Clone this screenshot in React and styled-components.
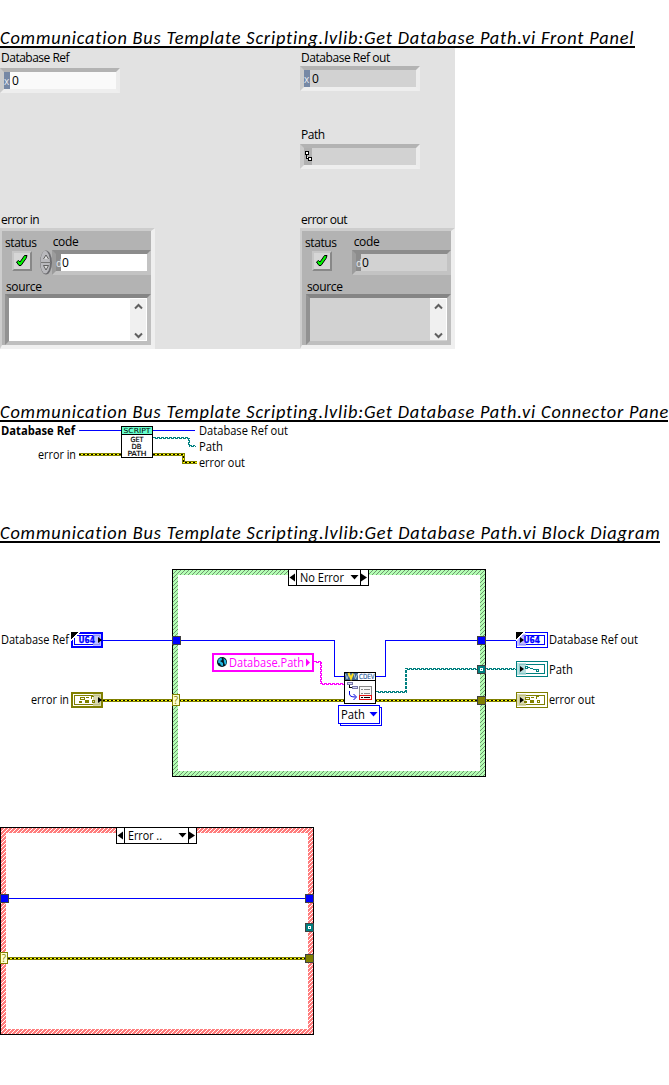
import React from 'react';
import styled, { createGlobalStyle } from 'styled-components';

const C = {
  blue: '#0000ff', teal: '#008080', olive: '#808000', pink: '#ff00ff',
};
const UI = `'Open Sans', 'Noto Sans', sans-serif`;

const Global = createGlobalStyle`
  html, body { margin: 0; padding: 0; background: #fff; }
  * { box-sizing: border-box; }
`;
const Page = styled.main`
  display: flex; flex-direction: column; align-items: flex-start;
  width: 669px; height: 1085px; padding-top: 24px; overflow: hidden;
  font-family: ${UI}; font-size: 12px; color: #000;
`;
const Heading = styled.h2`
  margin: ${p => p.$gap || 0}px 0 0; width: ${p => p.$w}px; height: 24px;
  border-bottom: 2px solid #000; white-space: nowrap;
  font: italic 400 18.3px/29px Carlito, Lato, sans-serif;
  letter-spacing: ${p => p.$ls}px;
  position: relative; clip-path: inset(0 -4px 0 0);
`;
const Panel = styled.section`
  display: grid; grid-template-columns: 300px 155px;
  width: 455px; height: 301px; background: #e2e2e2;
`;
const Column = styled.div`display: flex; flex-direction: column; align-items: flex-start;`;
const Label = styled.div`
  height: 16px; line-height: ${p => p.$lh || 17}px; white-space: nowrap;
  margin: ${p => p.$m || '0'}; letter-spacing: ${p => p.$ls ?? -0.5}px;
`;
const Field = styled.div`
  display: flex; align-items: stretch; flex: none;
  width: ${p => p.$w || 120}px; height: ${p => p.$h || 25}px; margin: ${p => p.$m || '0'};
  border-style: solid; border-width: 4px;
  border-color: ${p => p.$dark ? '#8c8c8c #c3c3c3 #c3c3c3 #9c9c9c' : '#b3b3b3 #ececec #eeeeee #cbcbcb'};
  background: ${p => p.$bg};
`;
const Radix = styled.span`
  flex: none; width: ${p => p.$w || 6}px; background: ${p => p.$bg}; color: #e8ecf2;
  font-size: 10px; line-height: 18px; overflow: visible;
`;
const Value = styled.span`padding-left: ${p => p.$pl ?? 2}px; line-height: 18px; letter-spacing: -0.5px;`;
const Cluster = styled.div`
  width: 155px; height: 121px; padding: 0 0 0 3px; background: #b3b3b3;
  border-style: solid; border-width: 3px 4px 4px 2px;
  border-color: #cdcdcd #efefef #f0f0f0 #cdcdcd;
`;
const Row = styled.div`display: flex; align-items: flex-start; height: ${p => p.$h}px; width: 146px;`;
const Check = styled.div`
  flex: none; width: 20px; height: 20px; margin: 1px ${p => p.$gap}px 0 7px; background: #d6d6d6;
  border: 2px solid; border-color: #c6c6c6 #888 #888 #c6c6c6;
`;
const Source = styled.div`
  display: flex; justify-content: flex-end; width: ${p => p.$w}px; height: 51px;
  margin-left: ${p => p.$ml}px; background: ${p => p.$bg};
  border-style: solid; border-width: 4px; border-color: #858585 #bfbfbf #bfbfbf #929292;
`;
const Scroll = styled.div`
  width: 17px; height: 42px; background: #f0f0f0; border: solid #fff; border-width: 1px 1px 0 0;
  display: flex; flex-direction: column; justify-content: space-between; align-items: center; padding: 4px 0 1px;
`;
const Figure = styled.svg`
  display: block; flex: none; overflow: visible; font-family: ${UI}; font-size: 12px;
  margin-top: ${p => p.$gap || 0}px;
`;
const Crisp = styled.g`shape-rendering: crispEdges;`;
const Wire = styled.path`fill: none; stroke: ${p => p.$c}; stroke-width: ${p => p.$w || 1};
  stroke-dasharray: ${p => p.$dash || 'none'}; stroke-dashoffset: ${p => p.$off || 0};
  shape-rendering: crispEdges;`;
const Tiny = styled.text`font: ${p => p.$fw || 700} ${p => p.$fs || 7}px 'DejaVu Sans', sans-serif; fill: ${p => p.$c || '#000'};`;

const T = ({ x, y, w, children, ...r }) => (
  <text x={x} y={y} textLength={w} lengthAdjust="spacingAndGlyphs" {...r}>{children}</text>
);
const ErrorWire = ({ d }) => (<>
  <Wire d={d} $c={C.olive} $w={3} />
  <Wire d={d} $c="#ffff00" />
  <Wire d={d} $c="#000" $dash="2 2" />
</>);
const WavyWire = ({ d, c }) => (<>
  <Wire d={d} $c={c} $dash="3 1" />
  <g transform="translate(1 1)"><Wire d={d} $c={c} $dash="3 1" $off={3} /></g>
</>);

const CheckMark = () => (
  <svg width="16" height="16" viewBox="0 0 16 16" style={{ display: 'block' }}>
    <path d="M2.500 9l2-1.500L6 9 10.500 2.500h2.500L12 5.500 7 12.500H5z" fill="#00f800" stroke="#000" strokeWidth="1" />
  </svg>
);
const Spinner = () => (
  <svg width="12" height="25" viewBox="0 0 12 25" style={{ flex: 'none' }}>
    <ellipse cx="6" cy="12.500" rx="6" ry="12" fill="#6c6c70" />
    <ellipse cx="5.200" cy="12.200" rx="4.800" ry="11.400" fill="#b9b9bd" />
    <path d="M1 12.500h10" stroke="#777" />
    <path d="M3.500 9L6 5l2.500 4M3.500 15.500h5L6 20z" fill="#ddd" stroke="#555" strokeWidth=".9" />
  </svg>
);
const Chevron = ({ down }) => (
  <svg width="9" height="7" viewBox="0 0 9 7">
    <path d={down ? 'M1 1.500l3.500 3.500L8 1.500' : 'M1 5.500L4.500 2 8 5.500'} fill="none" stroke="#606060" strokeWidth="2" />
  </svg>
);

const ErrorCluster = ({ out }) => (
  <Cluster>
    <Row $h={19}>
      <Label $m="3px 0 0" $ls={-0.4}>status</Label>
      <Label $m={out ? '2px 0 0 17px' : '2px 0 0 16px'} $ls={-0.3}>code</Label>
    </Row>
    <Row $h={26}>
      <Check $gap={out ? 20 : 8}><CheckMark /></Check>
      {!out && <Spinner />}
      <Field $dark $w={99} $bg={out ? '#d2d2d2' : '#fff'}>
        <Radix $w={5} $bg="#8c8c8c">d</Radix><Value $pl={1}>0</Value>
      </Field>
    </Row>
    <Row $h={18}><Label $m={out ? '2px 0 0 2px' : '2px 0 0 1px'} $ls={-0.35}>source</Label></Row>
    <Source $w={out ? 145 : 146} $ml={out ? 1 : 0} $bg={out ? '#d2d2d2' : '#fff'}>
      <Scroll><Chevron /><Chevron down /></Scroll>
    </Source>
  </Cluster>
);

const Tunnel = ({ x, y, c, hollow }) => (
  <Crisp>
    <rect x={x} y={y} width="9" height="9" fill="#404040" />
    <rect x={x + 1} y={y + 1} width="7" height="7" fill={c} />
    {hollow && <><rect x={x + 3} y={y + 3} width="3" height="3" fill="#fff" /><rect x={x + 4} y={y + 4} width="1" height="1" fill={c} /></>}
  </Crisp>
);

const CaseFrame = ({ id, base, line, title, tw, children }) => (
  <>
    <defs>
      <linearGradient id={id} gradientUnits="userSpaceOnUse" x1="0" y1="0" x2="2" y2="2" spreadMethod="repeat">
        <stop offset="0" stopColor={base} />
        <stop offset=".375" stopColor={base} />
        <stop offset=".375" stopColor={line} />
        <stop offset=".625" stopColor={line} />
        <stop offset=".625" stopColor={base} />
        <stop offset="1" stopColor={base} />
      </linearGradient>
    </defs>
    <Crisp>
      <path d="M0 0H314V208H0z" fill="#000" />
      <path d="M1 1H313V207H1z" fill={`url(#${id})`} />
      <path d="M6 6H308V202H6z" fill="#fff" />
      <path d="M116.500 .5H196.500V16.500H116.500zM124.500 .5V16.500M188.500 .5V16.500" fill="#fff" stroke="#000" />
    </Crisp>
    <path d="M117.500 8.500l5.500-4v8zM189 4.500v8l6-4zM178.500 6h8l-4 4.500z" />
    <T x={128} y={13} w={tw}>{title}</T>
    {children}
  </>
);
const Selector = () => (
  <>
    <Crisp><rect x=".5" y="125.500" width="7" height="11" fill="#ffffd0" stroke={C.olive} /></Crisp>
    <text x="1.800" y="135" fontSize="10" fill={C.olive}>?</text>
  </>
);

const Glyph = ({ kind }) => {
  if (kind === 'u64') return <Tiny x="7.500" y="11" $fs={8.5} $c={C.blue} textLength="16.500" lengthAdjust="spacingAndGlyphs" stroke={C.blue} strokeWidth=".3">U64</Tiny>;
  if (kind === 'path') return <Crisp><path d="M9.500 5.500h2v2h-2zM20.500 8.500h2v2h-2z" fill="none" stroke={C.teal} /><path d="M12 6.500h2M14 7.500h3M17 8.500h3" fill="none" stroke={C.teal} /></Crisp>;
  return <Crisp><path d="M9 5h5v1h-5zM9 6h1v2h-1zM13 6h1v2h-1zM9 7h5v1h-5zM15 5h3v1h-3zM20 4h3v1h-2v2h-1zM8 9h3v2h-3zM14 8h4v3h-4zM21 8h3v1h-3zM21 10h3v1h-3zM21 9h1v1h-1zM23 9h1v1h-1z" fill={C.olive} /></Crisp>;
};
const Terminal = ({ x, y, c, tint, kind, input }) => (
  <g transform={`translate(${x} ${y})`}>
    <Crisp>
      <rect width="32" height="16" fill={c} />
      <rect x={input ? 2 : 1} y={input ? 2 : 1} width={input ? 28 : 30} height={input ? 12 : 14} fill="#fff" />
      <rect x="3.500" y="3.500" width="25" height="9" fill="#fff" stroke={c} />
      <rect x={input ? 22 : 1} y="2" width={input ? 8 : 9} height="12" fill={tint} fillOpacity=".8" />
    </Crisp>
    <Glyph kind={kind} />
    {kind === 'u64' && <Crisp><path d="M0 0H9L0 9z" fill="#fff" /><path d="M0 0H7.500L0 7.500z" fill="#000" /></Crisp>}
    <path d={input ? 'M27 5v6l4-3z' : 'M4 5v6l4-3z'} />
  </g>
);

const ConnectorPane = () => (
  <Figure width="669" height="50" viewBox="0 422 669 50">
    <T x={1} y={435} w={74} fontWeight="700">Database Ref</T>
    <T x={38} y={459} w={38}>error in</T>
    <T x={199} y={435} w={89}>Database Ref out</T>
    <T x={199} y={451} w={24}>Path</T>
    <T x={199} y={467} w={46}>error out</T>
    <Wire d="M79 430.500H195" $c={C.blue} />
    <ErrorWire d="M79 454.500H121" />
    <ErrorWire d="M153 454.500H183.500V462.500H197" />
    <WavyWire d="M153 437.500H188.500V445.500H195" c={C.teal} />
    <Crisp>
      <rect x="121.500" y="426.500" width="31" height="31" fill="#fff" stroke="#000" />
      <rect x="122" y="427" width="30" height="7" fill="#66ffcc" />
      <rect x="122" y="434" width="30" height="1" />
    </Crisp>
    <Tiny x="123.500" y="433" $fw={400} textLength="27" lengthAdjust="spacingAndGlyphs">SCRIPT</Tiny>
    <Tiny x="130.500" y="442" $fw={400} stroke="#000" strokeWidth=".2" textLength="13" lengthAdjust="spacingAndGlyphs">GET</Tiny>
    <Tiny x="131.500" y="449" $fw={400} stroke="#000" strokeWidth=".2" textLength="10" lengthAdjust="spacingAndGlyphs">DB</Tiny>
    <Tiny x="127.500" y="456" $fw={400} stroke="#000" strokeWidth=".2" textLength="19" lengthAdjust="spacingAndGlyphs">PATH</Tiny>
  </Figure>
);

const PropertyNode = () => (
  <>
    <Crisp>
      <rect x="344.500" y="672.500" width="31" height="31" fill="#fff" stroke="#000" />
      <rect x="345" y="673" width="13" height="7" fill="#3d6591" />
      <rect x="345" y="680" width="30" height="1" />
      <rect x="347.500" y="682.500" width="5" height="2" fill="#d8d8f8" stroke="#7777a8" />
      <rect x="352.500" y="686.500" width="5" height="2" fill="#d8d8f8" stroke="#7777a8" />
      <path d="M349.500 685v2.500H352" fill="none" stroke="#000" />
      <rect x="359.500" y="686.500" width="12" height="13" fill="#f8f8f8" stroke="#888" />
      <path d="M361 689.500h2M364 689.500h6M361 693.500h2M364 693.500h6" stroke="#888" />
      <path d="M361 697.500h2M364 697.500h6" stroke="#000" />
      <rect x="359.500" y="695.500" width="12" height="4" fill="none" stroke="#e01010" />
    </Crisp>
    <path d="M345.500 674l1.500 5 2-5M354 674l1.500 5 2-5" fill="none" stroke="#a9c3d8" />
    <path d="M348.500 673l2.500 5.500 2-5" fill="none" stroke="#ffe020" strokeWidth="2" />
    <Tiny x="359" y="679" $fw={400} $c="#3465a4" stroke="#3465a4" strokeWidth=".2" textLength="15.500" lengthAdjust="spacingAndGlyphs">CDEV</Tiny>
    <path d="M349.500 691v3q0 3 6 3M353.500 694l3 3-3 3" fill="none" stroke="#0000e0" />
    <Crisp>
      <path d="M340.500 707.500H381.500V725.500H340.500z" fill="#fff" stroke={C.blue} />
      <path d="M338.500 705.500H379.500V723.500H338.500z" fill="#fff" stroke={C.blue} />
    </Crisp>
    <T x={341} y={719} w={24}>Path</T>
    <path d="M369.500 712h8l-4 4.500z" fill={C.blue} />
  </>
);

const BlockDiagram = () => (
  <Figure width="669" height="208" viewBox="0 569 669 208" $gap={26}>
    <g transform="translate(172 569)">
      <CaseFrame id="hatchOk" base="#b4ffb4" line="#6f936f" title="No Error" tw={44} />
    </g>
    <Wire d="M103 640.500H334.500V676.500H344M376 676.500H385.500V640.500H516" $c={C.blue} />
    <WavyWire d="M376 691.500H405.500V668.500H515" c={C.teal} />
    <WavyWire d="M314 661.500H320.500V683.500H343" c={C.pink} />
    <ErrorWire d="M103 700.500H516" />
    <g transform="translate(172 569)"><Selector /></g>
    <Tunnel x={172} y={636} c={C.blue} />
    <Tunnel x={477} y={636} c={C.blue} />
    <Tunnel x={477} y={665} c={C.teal} hollow />
    <Tunnel x={477} y={696} c={C.olive} />
    <Terminal x={71} y={632} c={C.blue} tint="#b0b0ff" kind="u64" input />
    <Terminal x={71} y={692} c={C.olive} tint="#d0d0a0" kind="cluster" input />
    <Terminal x={516} y={632} c={C.blue} tint="#b0b0ff" kind="u64" />
    <Terminal x={516} y={661} c={C.teal} tint="#a8d8d8" kind="path" />
    <Terminal x={516} y={692} c={C.olive} tint="#d0d0a0" kind="cluster" />
    <T x={1} y={644} w={68}>Database Ref</T>
    <T x={31} y={704} w={38}>error in</T>
    <T x={549} y={644} w={89}>Database Ref out</T>
    <T x={549} y={674} w={24}>Path</T>
    <T x={549} y={704} w={46}>error out</T>
    <Crisp><rect x="213" y="654" width="100" height="17" fill="#fff" stroke={C.pink} strokeWidth="2" /></Crisp>
    <circle cx="222" cy="662" r="5" fill="#001820" />
    <path d="M218.500 659l3-1.500.5 2.500-2 1 3 2v3l-2-.5-1-2-2-1zM223.500 658l2.500 2.500.5 3-1.500 1.500-1-3z" fill="#20b8e0" />
    <T x={229} y={667} w={75} fill={C.pink}>Database.Path</T>
    <path d="M306 658.500v8l4-4z" fill={C.pink} />
    <PropertyNode />
  </Figure>
);

const ErrorCase = () => (
  <Figure width="314" height="208" viewBox="0 0 314 208" $gap={50}>
    <CaseFrame id="hatchErr" base="#ff7c7c" line="#ffffff" title="Error .." tw={34}>
      <Wire d="M9 71.500H306" $c={C.blue} />
      <ErrorWire d="M8 131.500H306" />
      <Selector />
      <Tunnel x={0} y={67} c={C.blue} />
      <Tunnel x={305} y={67} c={C.blue} />
      <Tunnel x={305} y={96} c={C.teal} hollow />
      <Tunnel x={305} y={127} c={C.olive} />
    </CaseFrame>
  </Figure>
);

const LIB = 'Communication Bus Template Scripting.lvlib:Get Database Path.vi ';

export default function App() {
  return (
    <Page>
      <Global />
      <Heading $w={635} $ls={0.83}>{LIB}Front Panel</Heading>
      <Panel>
        <Column>
          <Label $m="2px 0 2px 1px" $lh={16}>Database Ref</Label>
          <Field $bg="#fafafa"><Radix $bg="#7688a5">x</Radix><Value>0</Value></Field>
          <Label $m="118px 0 1px 1px">error in</Label>
          <ErrorCluster />
        </Column>
        <Column>
          <Label $m="2px 0 0 1px" $lh={16} $ls={-0.45}>Database Ref out</Label>
          <Field $bg="#d2d2d2"><Radix $bg="#7688a5">x</Radix><Value>0</Value></Field>
          <Label $m="35px 0 2px 1px">Path</Label>
          <Field $bg="#d2d2d2">
            <Radix $w={8} $bg="#b0b0b0">
              <svg width="8" height="17" viewBox="0 0 8 17" shapeRendering="crispEdges" style={{ display: 'block' }}>
                <path d="M1.500 3.500h3v3h-3zM4.500 9.500h3v3h-3zM2.500 7v3.500H4" fill="#fff" stroke="#000" />
              </svg>
            </Radix>
          </Field>
          <Label $m="42px 0 1px 1px">error out</Label>
          <ErrorCluster out />
        </Column>
      </Panel>
      <Heading $w={668} $gap={49} $ls={0.83}>{LIB}Connector Pane</Heading>
      <ConnectorPane />
      <Heading $w={660} $gap={47} $ls={0.84}>{LIB}Block Diagram</Heading>
      <BlockDiagram />
      <ErrorCase />
    </Page>
  );
}
